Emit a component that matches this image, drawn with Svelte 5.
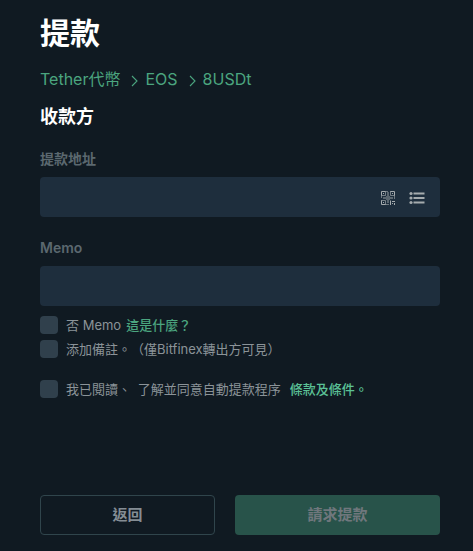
<script>
    let address = "";
    let memo = "";
    let noMemo = false;
    let addNote = false;
    let accepted = false;

    const path = ["Tether代幣", "EOS", "8USDt"];
</script>

<main>
    <h1>提款</h1>
    <nav>
        {#each path as step, i}
            {#if i > 0}
                <svg class="chevron" width="8" height="12" viewBox="0 0 8 12">
                    <path d="M1 1l5 5L1 11" />
                </svg>
            {/if}
            <a href="#{step}">{step}</a>
        {/each}
    </nav>
    <h2>收款方</h2>

    <label class="title" for="address">提款地址</label>
    <div class="field">
        <input id="address" type="text" bind:value={address} />
        <button type="button" class="icon" aria-label="QR">
            <svg width="16" height="16" viewBox="0 0 16 16">
                <g fill="none" stroke="currentColor">
                    <path d="M5.5 1.5h-4v4M10.5 1.5h4v4M1.5 10.5v4h4" />
                    <path opacity=".65" d="M5.5 1v4.5H1M10.5 1v4.5H15M1 10.5h4.5V15" />
                    <path d="M10.5 15v-4.5M12 11.5h3M12 13.5h1M14.5 13v2" />
                    <path opacity=".6" d="M6 1.5h2M1.5 6v2M14.5 6v3M6 14.5h3" />
                </g>
                <path fill="currentColor" d="M3 3h1v1H3zM12 3h1v1h-1zM3 12h1v1H3z" />
                <path fill="currentColor" opacity=".45" d="M7 2h2v4h1v1h3v2h-3v1H9v3H7v-3H6V9H3V7h3V6h1z" />
            </svg>
        </button>
        <button type="button" class="icon" aria-label="List">
            <svg width="16" height="16" viewBox="0 0 16 16" fill="currentColor">
                <circle cx="2" cy="3.5" r="1.6" />
                <circle cx="2" cy="8" r="1.6" />
                <circle cx="2" cy="12.5" r="1.6" />
                <path d="M4.5 2.5h11v2h-11zM4.5 7h11v2h-11zM4.5 11.5h11v2h-11z" />
            </svg>
        </button>
    </div>

    <label class="title" for="memo">Memo</label>
    <div class="field">
        <input id="memo" type="text" bind:value={memo} />
    </div>

    <div class="options">
        <label>
            <input type="checkbox" bind:checked={noMemo} />
            <span>否 Memo</span>
            <a href="#memo">這是什麼？</a>
        </label>
        <label>
            <input type="checkbox" bind:checked={addNote} />
            <span>添加備註。（僅Bitfinex轉出方可見）</span>
        </label>
        <label class="terms">
            <input type="checkbox" bind:checked={accepted} />
            <span>我已閱讀、 了解並同意自動提款程序</span>
            <a href="#terms">條款及條件。</a>
        </label>
    </div>

    <div class="actions">
        <button type="button" class="back">返回</button>
        <button type="button" class="submit" disabled={!accepted}>請求提款</button>
    </div>
</main>

<style>
    :global(body) {
        background: #101a22;
    }

    main {
        box-sizing: border-box;
        width: 473px;
        height: 551px;
        padding: 12px 33px 16px 40px;
        display: flex;
        flex-direction: column;
        background: #101a22;
        color: #fff;
        font-family: Inter, "Noto Sans CJK TC", sans-serif;
        text-spacing-trim: space-all;
    }

    h1 {
        margin: 0;
        font-size: 30px;
        font-weight: 700;
        line-height: 42px;
    }

    h2 {
        margin: 14px 0 0;
        font-size: 18px;
        font-weight: 700;
        line-height: 26px;
    }

    a {
        color: #4ba57f;
        text-decoration: none;
    }

    nav {
        margin-top: 14px;
        display: flex;
        align-items: center;
        font-size: 16px;
        line-height: 22px;
    }

    .chevron {
        margin: 4px 6px 0 11px;
        fill: none;
        stroke: #4ba57f;
        stroke-width: 1.1;
    }

    .title {
        height: 20px;
        margin-top: 19px;
        color: #5b686f;
        font-size: 14px;
        font-weight: 600;
        line-height: 20px;
    }

    .field {
        box-sizing: border-box;
        width: 400px;
        height: 40px;
        margin-top: 8px;
        padding-right: 15px;
        display: flex;
        flex: none;
        align-items: center;
        border-radius: 4px;
        background: #1e2e3d;
    }

    .field + .title {
        margin-top: 21px;
    }

    .field input {
        flex: 1;
        min-width: 0;
        height: 100%;
        padding: 0 12px;
        box-sizing: border-box;
        border: 0;
        outline: 0;
        background: transparent;
        color: #fff;
        font: inherit;
    }

    .icon {
        margin-left: 13px;
        padding: 1px 0 0;
        display: flex;
        border: 0;
        background: none;
        color: #a5abae;
    }

    .options {
        margin-top: 10px;
        color: #8b9398;
        font-size: 13px;
        line-height: 18px;
    }

    .options label {
        height: 18px;
        margin-bottom: 6px;
        display: flex;
        align-items: center;
        white-space: nowrap;
    }

    .options .terms {
        margin-top: 22px;
    }

    .options input {
        appearance: none;
        width: 18px;
        height: 18px;
        margin: 0 8px 0 0;
        border-radius: 4px;
        background: #30404c;
    }

    .options input:checked {
        background: #4ba57f;
    }

    .options a {
        margin-left: 5px;
        font-weight: 500;
    }

    .options .terms a {
        margin-left: 9px;
        color: #5bc196;
    }

    .terms span {
        word-spacing: 3px;
    }

    .actions {
        margin-top: auto;
        display: grid;
        grid-template-columns: 175px 205px;
        gap: 20px;
    }

    .actions button {
        height: 40px;
        padding: 0 0 3px;
        border: 1px solid #30454c;
        border-radius: 4px;
        background: transparent;
        color: #848d94;
        font-family: inherit;
        font-size: 15px;
        font-weight: 600;
    }

    .actions .submit {
        border: 0;
        background: #28534a;
        color: #70777d;
    }
</style>
